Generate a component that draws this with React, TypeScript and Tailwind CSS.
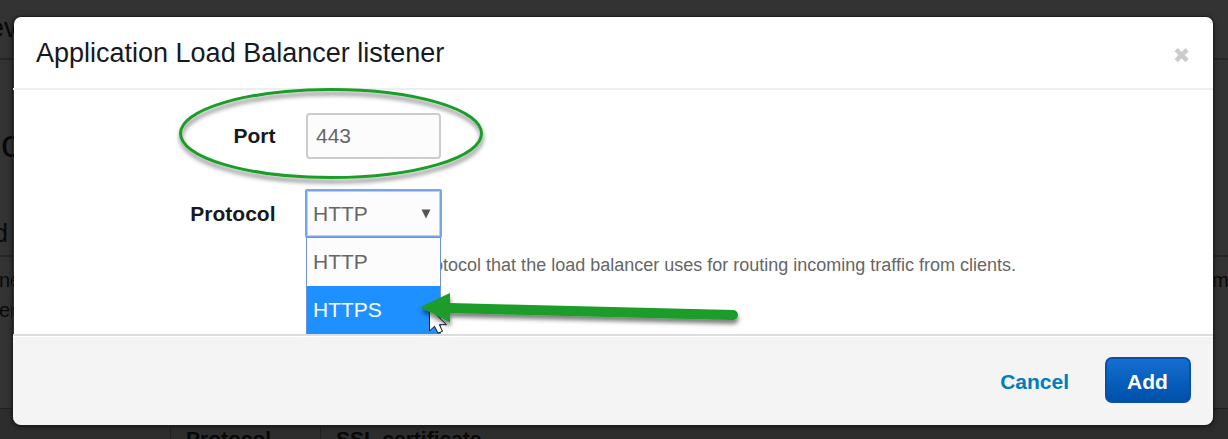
import React from "react";

const protocols = ["HTTP", "HTTPS"];

function PageBehind() {
  return (
    <div
      aria-hidden="true"
      className="flex h-full w-full flex-col overflow-hidden bg-[#333333] font-['Liberation_Sans',Arial,sans-serif] text-[#080808] select-none"
    >
      <div className="h-[60px] shrink-0 border-b-2 border-[#262626] pt-[13px]">
        <p className="-ml-[20px] text-[27px] leading-[30px]">rev</p>
      </div>
      <div className="flex h-[197px] shrink-0 flex-col justify-between border-b-2 border-[#262626] pt-[61px] pb-[8px]">
        <p className="pl-px text-[39px] leading-[46px]">c</p>
        <p className="-ml-[6px] text-[25px] leading-[28px]">d</p>
      </div>
      <div className="flex h-[151px] shrink-0 justify-between pt-[8px] text-[20px] leading-[30px]">
        <p className="-ml-px">
          ne
          <br />
          er
        </p>
        <p className="w-[16px]">m</p>
      </div>
      <div className="grid h-[31px] grid-cols-[170px_150px_1fr] border-t border-[#1f1f1f] bg-[#2d2d2d] text-[21px] leading-[24px] font-bold">
        <span />
        <span className="border-l border-[#222222] pt-[18px] pl-[15px]">Protocol</span>
        <span className="border-l border-[#222222] pt-[18px] pl-[15px]">SSL certificate</span>
      </div>
    </div>
  );
}

function CloseIcon() {
  return (
    <svg width="16" height="16" viewBox="0 0 16 16" aria-hidden="true">
      <path d="M3.1 2.7 L14.1 13.7 M14.1 2.7 L3.1 13.7" stroke="#cccccc" strokeWidth="4.6" />
    </svg>
  );
}

function ProtocolSelect() {
  return (
    <div className="relative h-[49px] w-[137px]">
      <div className="flex h-[49px] items-center justify-between rounded-[2px] border-2 border-[#76a5ee] bg-[#fcfcfc] pr-[9px] pl-[6px] text-[21px] text-[#666666] shadow-[inset_0_0_0_1px_#cccccc]">
        <span>HTTP</span>
        <svg width="10" height="10" viewBox="0 0 10 10" aria-hidden="true">
          <path d="M0.5 0.5 H9.5 L5 9.5 Z" fill="#555555" />
        </svg>
      </div>
      <ul className="absolute top-full -mt-px ml-px w-[135px] border-x border-t border-[#6d92d6] bg-[#fcfcfc] text-[21px]">
        {protocols.map((name) => (
          <li
            key={name}
            className={
              name === "HTTPS"
                ? "flex h-[48px] items-center bg-[#1e90ff] pl-[6px] text-white"
                : "flex h-[48px] items-center pl-[6px] text-[#666666]"
            }
          >
            {name}
          </li>
        ))}
      </ul>
    </div>
  );
}

function Annotations() {
  return (
    <svg
      className="pointer-events-none absolute inset-0"
      width="1228"
      height="439"
      viewBox="0 0 1228 439"
      aria-hidden="true"
    >
      <defs>
        <filter id="shade" x="-10%" y="-30%" width="120%" height="180%">
          <feDropShadow dx="0.5" dy="4" stdDeviation="2" floodColor="#000000" floodOpacity="0.5" />
        </filter>
      </defs>
      <ellipse cx="331" cy="133.5" rx="150.5" ry="44" fill="none" stroke="#1b9d2a" strokeWidth="3" filter="url(#shade)" />
      <path
        d="M429.5 308 V331 L434.5 326.3 L438 333.2 L442.5 331.3 L439.4 324.7 H446.4 Z"
        fill="#ffffff"
        stroke="#11111f"
        strokeWidth="1"
      />
      <path
        d="M420.3 307 L450 293 V303 L733 310 A5 5 0 0 1 733 320 L450 313 V322.5 Z"
        fill="#1b9d2a"
        filter="url(#shade)"
      />
    </svg>
  );
}

export default function App() {
  return (
    <div className="relative h-[439px] w-[1228px] overflow-hidden font-['Liberation_Sans',Arial,sans-serif]">
      <PageBehind />
      <div className="absolute inset-0 pt-[17px] pl-[13px]">
        <section
          role="dialog"
          aria-label="Application Load Balancer listener"
          className="flex h-[408px] w-[1200px] flex-col rounded-[8px] shadow-[0_0_0_1px_#1d1d1d,0_1px_5px_1px_rgba(0,0,0,0.5)]"
        >
          <header className="ml-px flex h-[71px] shrink-0 justify-between rounded-t-[7px] bg-white pr-[24px] pl-[22px]">
            <h1 className="pt-[21px] text-[27px] leading-[31px] text-[#16191f]">Application Load Balancer listener</h1>
            <button aria-label="Close" className="h-[16px] pt-[30px]">
              <CloseIcon />
            </button>
          </header>
          <div className="h-[2px] shrink-0 bg-[#eeeeee]" />
          <div className="ml-px h-[244px] shrink-0 bg-white pt-[23px]">
            <div className="flex h-[46px] items-center">
              <label className="w-[262px] pr-[0.5px] text-right text-[21px] font-bold text-[#16191f]">Port</label>
              <div className="ml-[30px] flex h-[46px] w-[135px] items-center rounded-[4px] border-2 border-[#cccccc] bg-[#fcfcfc] pl-[8px] text-[21px] text-[#666666]">
                443
              </div>
            </div>
            <div className="mt-[30px] flex h-[49px] items-center">
              <label className="w-[262px] pr-[0.5px] text-right text-[21px] font-bold text-[#16191f]">Protocol</label>
              <div className="ml-[29px]">
                <ProtocolSelect />
              </div>
            </div>
            <p className="pt-[17px] pl-[295px] text-[18px] leading-[21px] whitespace-nowrap text-[#666666]">
              Specifies the protocol that the load balancer uses for routing incoming traffic from clients.
            </p>
          </div>
          <footer className="flex h-[91px] items-start justify-end rounded-b-[8px] border-t-2 border-[#dddddd] bg-[#f4f4f4] pt-[21px] pr-[22px] shadow-[inset_0_1px_0_#ffffff]">
            <button className="mr-[36px] h-[46px] pt-[4px] text-[21px] font-bold text-[#007dbc]">Cancel</button>
            <button className="h-[46px] w-[86px] rounded-[7px] border-2 border-[#0a4fa5] bg-linear-to-b from-[#146fd1] to-[#0050aa] pt-[4px] pr-px text-[21px] font-bold text-white">
              Add
            </button>
          </footer>
        </section>
      </div>
      <Annotations />
    </div>
  );
}
